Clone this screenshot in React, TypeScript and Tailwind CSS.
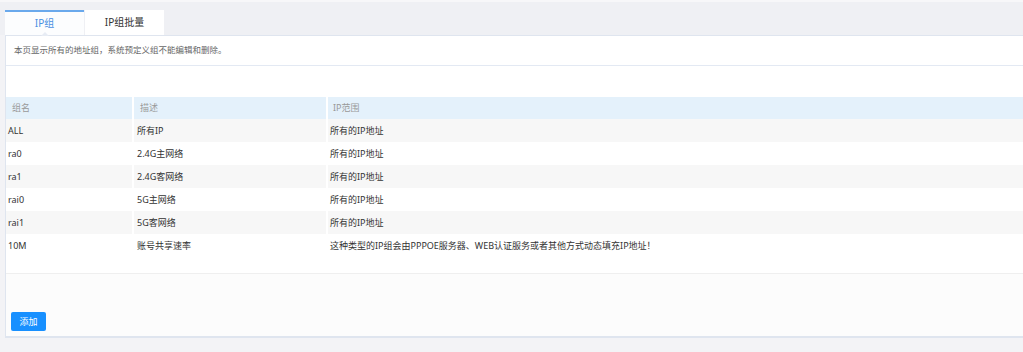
const rows = [
  { name: 'ALL', desc: '所有IP', range: '所有的IP地址' },
  { name: 'ra0', desc: '2.4G主网络', range: '所有的IP地址' },
  { name: 'ra1', desc: '2.4G客网络', range: '所有的IP地址' },
  { name: 'rai0', desc: '5G主网络', range: '所有的IP地址' },
  { name: 'rai1', desc: '5G客网络', range: '所有的IP地址' },
  { name: '10M', desc: '账号共享速率', range: '这种类型的IP组会由PPPOE服务器、WEB认证服务或者其他方式动态填充IP地址！' },
];

export default function App() {
  return (
    <div
      className="w-[1023px] h-[352px] overflow-hidden bg-[#f3f3f6]"
      style={{ fontFamily: '"Noto Sans", "Noto Sans CJK SC", sans-serif' }}
    >
      {/* tab strip */}
      <div className="bg-[#eff0f4] pt-[8px] pl-[5px] border-t-2 border-[#f7f7f9]">
        <div className="flex h-[25px]">
          <div className="relative w-[79px] bg-[#fcfdfe] border-t-2 border-[#6aa9ec] flex items-center justify-center text-[10px] text-[#4a90e2]">
            IP组
            <span className="absolute left-1/2 -translate-x-1/2 bottom-[-1px] w-0 h-0 border-l-[4px] border-r-[4px] border-b-[4px] border-l-transparent border-r-transparent border-b-[#e7ecf4]" />
          </div>
          <div className="ml-[1px] w-[79px] bg-white flex items-center justify-center text-[10px] text-[#333]">
            IP组批量
          </div>
        </div>
      </div>

      {/* card */}
      <div className="ml-[5px] bg-white border-l border-t border-b-2 border-[#dfe5ef] h-[303px] flex flex-col">
        <div className="h-[30px] border-b border-[#e3e9f3] flex items-center pl-[8px] text-[8.5px] text-[#666]">
          本页显示所有的地址组，系统预定义组不能编辑和删除。
        </div>

        <div className="h-[31px]" />

        <div className="flex gap-[2px] h-[22px] text-[9px] text-[#999]">
          <div className="w-[126px] bg-[#e4f1fb] flex items-center pl-[6px]">组名</div>
          <div className="w-[192px] bg-[#e4f1fb] flex items-center pl-[6px]">描述</div>
          <div className="flex-1 bg-[#e4f1fb] flex items-center pl-[5px]">IP范围</div>
        </div>

        {rows.map((r, i) => {
          const bg = i % 2 === 0 ? 'bg-[#f7f7f7]' : 'bg-white';
          return (
            <div key={r.name} className="flex gap-[2px] h-[23px] text-[9px] text-[#333]">
              <div className={`w-[126px] ${bg} flex items-center pl-[2px]`}>{r.name}</div>
              <div className={`w-[192px] ${bg} flex items-center pl-[3px]`}>{r.desc}</div>
              <div className={`flex-1 ${bg} flex items-center pl-[2px]`}>{r.range}</div>
            </div>
          );
        })}

        <div className="h-[17px] border-b border-[#efefef]" />

        <div className="flex-1 bg-[#fcfcfc] flex items-end pl-[5px] pb-[5px]">
          <button className="w-[35px] h-[19px] rounded-[2px] bg-[#1890ff] text-white text-[9px] flex items-center justify-center">
            添加
          </button>
        </div>
      </div>
    </div>
  );
}
